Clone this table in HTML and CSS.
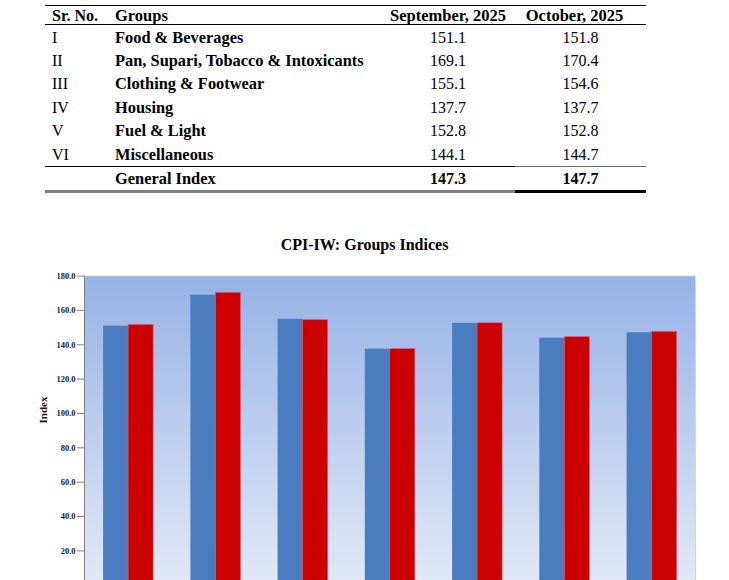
FILE: index.html
```html
<!DOCTYPE html>
<html lang="en">
<head>
<meta charset="utf-8">
<title>CPI-IW Groups Indices</title>
<link rel="stylesheet" href="styles.css">
</head>
<body>
<div class="page">
  <table class="cpi-table">
    <colgroup>
      <col class="c-sr"><col class="c-grp"><col class="c-sep"><col class="c-oct">
    </colgroup>
    <thead>
      <tr>
        <th class="sr">Sr. No.</th>
        <th class="grp">Groups</th>
        <th class="num">September, 2025</th>
        <th class="num oct-h">October, 2025</th>
      </tr>
    </thead>
    <tbody>
      <tr><td class="sr">I</td><td class="grp">Food &amp; Beverages</td><td class="num">151.1</td><td class="num">151.8</td></tr>
      <tr><td class="sr">II</td><td class="grp">Pan, Supari, Tobacco &amp; Intoxicants</td><td class="num">169.1</td><td class="num">170.4</td></tr>
      <tr><td class="sr">III</td><td class="grp">Clothing &amp; Footwear</td><td class="num">155.1</td><td class="num">154.6</td></tr>
      <tr><td class="sr">IV</td><td class="grp">Housing</td><td class="num">137.7</td><td class="num">137.7</td></tr>
      <tr><td class="sr">V</td><td class="grp">Fuel &amp; Light</td><td class="num">152.8</td><td class="num">152.8</td></tr>
      <tr><td class="sr">VI</td><td class="grp">Miscellaneous</td><td class="num">144.1</td><td class="num">144.7</td></tr>
    </tbody>
    <tfoot>
      <tr class="total">
        <td class="sr"></td><td class="grp">General Index</td><td class="num">147.3</td><td class="num last">147.7</td>
      </tr>
    </tfoot>
  </table>

  <h2 class="chart-title">CPI-IW: Groups Indices</h2>

  <svg class="chart" width="729" height="326" viewBox="0 254 729 326" xmlns="http://www.w3.org/2000/svg">
    <defs>
      <linearGradient id="bg" x1="0" y1="0" x2="0" y2="1">
        <stop offset="0" stop-color="#95b2e6"/>
        <stop offset="0.45" stop-color="#b9cbee"/>
        <stop offset="1" stop-color="#e2e9f7"/>
      </linearGradient>
    </defs>
    <rect x="84.5" y="275" width="611" height="312" fill="url(#bg)" stroke="#c9d7f0" stroke-width="1"/>
    <g class="bars">
      <rect class="sep" x="103.1" y="324.7" width="25" height="260"/>
      <rect class="oct" x="128.1" y="323.5" width="25" height="262"/>
      <rect class="sep" x="190.4" y="293.8" width="25" height="292"/>
      <rect class="oct" x="215.4" y="291.5" width="25" height="294"/>
      <rect class="sep" x="277.6" y="317.8" width="25" height="268"/>
      <rect class="oct" x="302.6" y="318.7" width="25" height="267"/>
      <rect class="sep" x="364.8" y="347.7" width="25" height="238"/>
      <rect class="oct" x="389.8" y="347.7" width="25" height="238"/>
      <rect class="sep" x="452.1" y="321.8" width="25" height="264"/>
      <rect class="oct" x="477.1" y="321.8" width="25" height="264"/>
      <rect class="sep" x="539.3" y="336.7" width="25" height="249"/>
      <rect class="oct" x="564.3" y="335.7" width="25" height="250"/>
      <rect class="sep" x="626.6" y="331.2" width="25" height="254"/>
      <rect class="oct" x="651.6" y="330.5" width="25" height="255"/>
    </g>
    <line x1="84.5" y1="275" x2="84.5" y2="590" stroke="#7f7f7f" stroke-width="1"/>
    <g class="ticks" stroke="#7f7f7f" stroke-width="1">
      <line x1="77" y1="275.1" x2="84.5" y2="275.1"/>
      <line x1="77" y1="309.4" x2="84.5" y2="309.4"/>
      <line x1="77" y1="343.8" x2="84.5" y2="343.8"/>
      <line x1="77" y1="378.1" x2="84.5" y2="378.1"/>
      <line x1="77" y1="412.5" x2="84.5" y2="412.5"/>
      <line x1="77" y1="446.8" x2="84.5" y2="446.8"/>
      <line x1="77" y1="481.2" x2="84.5" y2="481.2"/>
      <line x1="77" y1="515.5" x2="84.5" y2="515.5"/>
      <line x1="77" y1="549.9" x2="84.5" y2="549.9"/>
      <line x1="77" y1="584.2" x2="84.5" y2="584.2"/>
    </g>
    <g class="ylabels" text-anchor="end">
      <text x="75.5" y="278">180.0</text>
      <text x="75.5" y="312.3">160.0</text>
      <text x="75.5" y="346.7">140.0</text>
      <text x="75.5" y="381">120.0</text>
      <text x="75.5" y="415.4">100.0</text>
      <text x="75.5" y="449.7">80.0</text>
      <text x="75.5" y="484.1">60.0</text>
      <text x="75.5" y="518.4">40.0</text>
      <text x="75.5" y="552.8">20.0</text>
      <text x="75.5" y="587.1">0.0</text>
    </g>
    <text class="ytitle" x="0" y="0" transform="translate(47 409) rotate(-90)" text-anchor="middle">Index</text>
  </svg>
</div>
</body>
</html>
```

FILE: styles.css
```css
html, body {
  margin: 0;
  padding: 0;
  background: #ffffff;
}

body {
  font-family: "Liberation Serif", "Times New Roman", serif;
  color: #000;
  overflow: hidden;
}

.page {
  width: 729px;
  height: 580px;
  overflow: hidden;
}

.cpi-table {
  margin: 5px 0 0 45px;
  width: 601px;
  border-collapse: separate;
  border-spacing: 0;
  table-layout: fixed;
  font-size: 16px;
}

.c-sr { width: 62px; }
.c-grp { width: 274px; }
.c-sep { width: 134px; }
.c-oct { width: 131px; }

.cpi-table th,
.cpi-table td {
  padding: 0;
  white-space: nowrap;
  vertical-align: middle;
}

.cpi-table thead th {
  font-weight: bold;
  font-size: 16.5px;
  height: 17px;
  line-height: 17px;
  padding-top: 1px;
  border-top: 1.5px solid #000;
  border-bottom: 1.5px solid #000;
  text-align: left;
}

.cpi-table thead th.sr { font-size: 16px; }

.cpi-table th.num { text-align: center; }
.cpi-table th.oct-h { padding-right: 12px; }

.cpi-table tbody td {
  height: 22.5px;
  line-height: 18px;
  padding-top: 1px;
}

.cpi-table tbody tr:first-child td { padding-top: 2px; height: 21.5px; }

.cpi-table .sr { padding-left: 7px; }
.cpi-table .grp { padding-left: 8px; }
.cpi-table td.grp { font-weight: bold; font-size: 16.4px; }
.cpi-table td.num { text-align: center; }

.total td {
  height: 23px;
  border-top: 1.5px solid #000;
  border-bottom: 3px solid #808080;
  font-weight: bold;
}

.total td.last {
  border-top: 1px solid #6e6e6e;
  border-bottom: 3px solid #000;
}

.chart-title {
  margin: 41.5px 0 0 0;
  height: 20px;
  line-height: 20px;
  font-size: 16px;
  font-weight: bold;
  text-align: center;
}

.chart {
  display: block;
}

.bars .sep { fill: #4a7dc0; }
.bars .oct { fill: #cc0000; stroke: #e0556a; stroke-width: 0.6; }

.ylabels text {
  font-family: "Liberation Serif", serif;
  font-size: 8.5px;
  font-weight: bold;
  fill: #222;
}

.ytitle {
  font-family: "Liberation Serif", serif;
  font-size: 11px;
  font-weight: bold;
  fill: #111;
}
```
